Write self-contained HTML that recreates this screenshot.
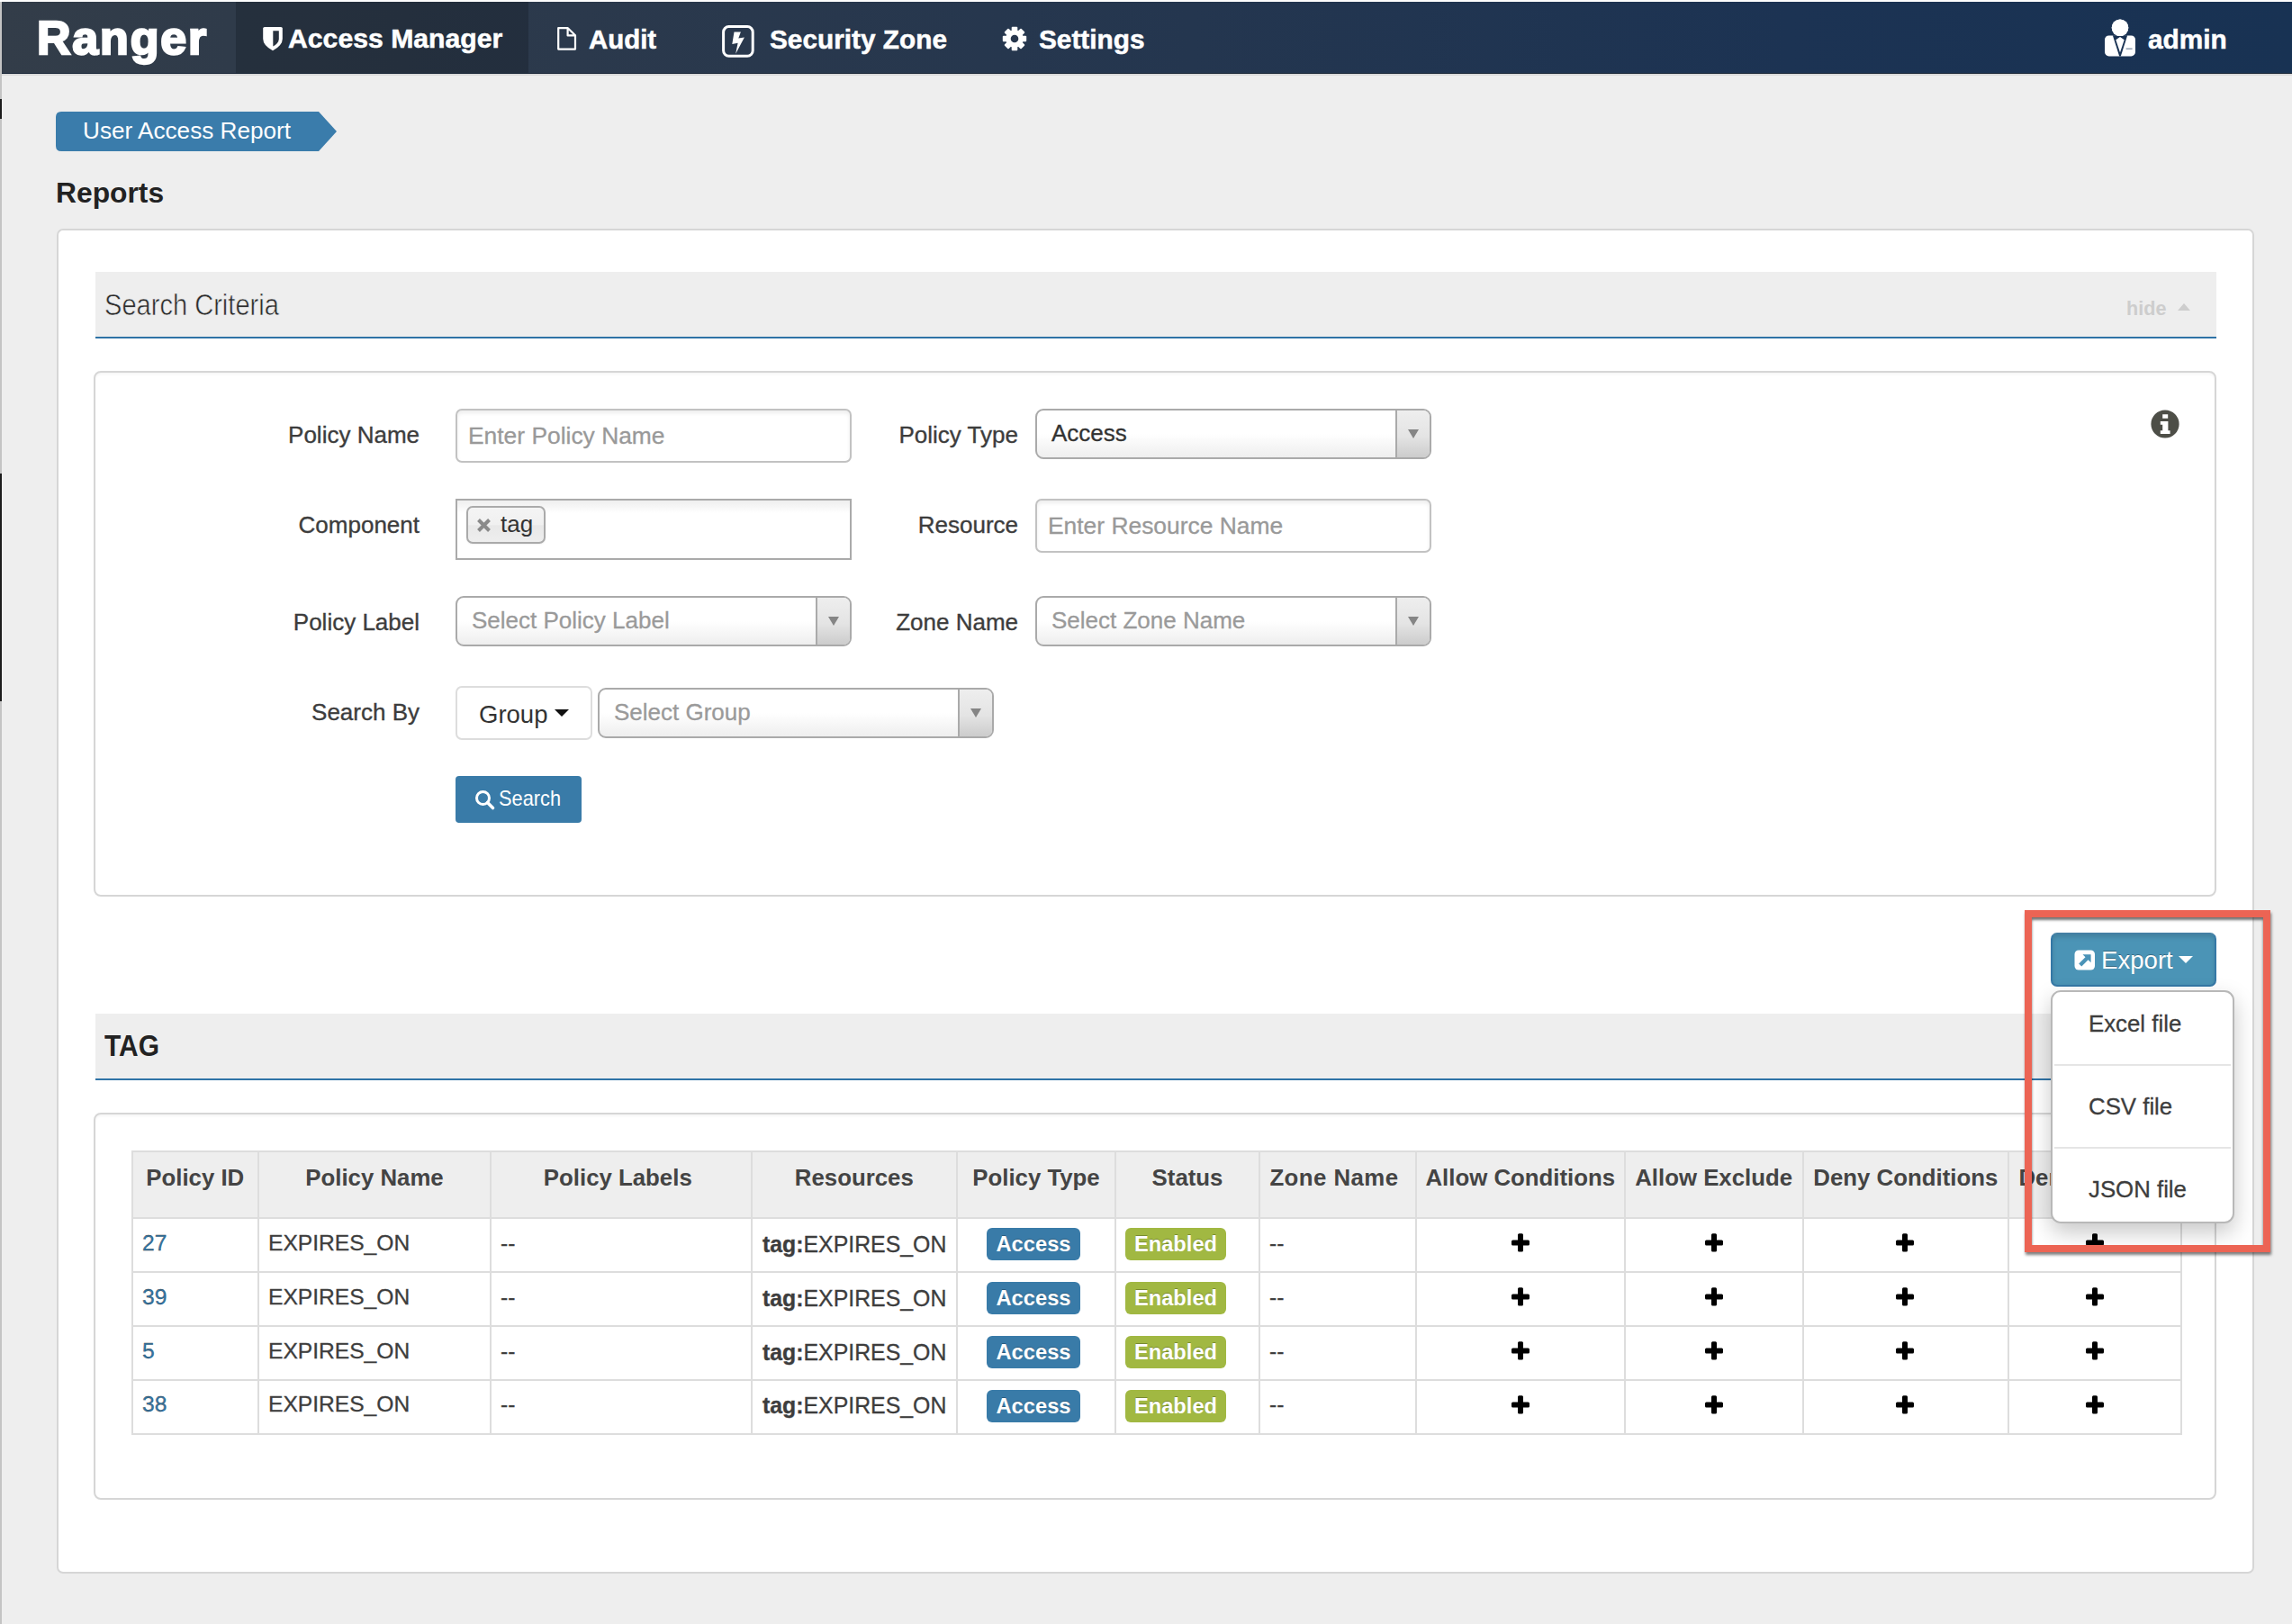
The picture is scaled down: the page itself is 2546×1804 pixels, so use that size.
<!DOCTYPE html>
<html>
<head>
<meta charset="utf-8">
<title>Ranger - User Access Report</title>
<style>
*{box-sizing:border-box;margin:0;padding:0}
html,body{width:2546px;height:1804px;overflow:hidden}
body{background:#eeeeee;font-family:"Liberation Sans",sans-serif;color:#333;position:relative}
.abs{position:absolute}
.t{position:absolute;white-space:nowrap;line-height:1}
/* left window strip */
#strip{left:0;top:0;width:2px;height:1804px;background:#c4c4c4}
#strip i{position:absolute;left:0;width:2px;background:#1c1c1c}
/* navbar */
#topwhite{left:0;top:0;width:2546px;height:2px;background:#fdfdfd}
#nav{left:2px;top:2px;width:2544px;height:80px;background:linear-gradient(90deg,#333d49 0%,#2f3b4a 10%,#2b394c 25%,#24364f 52%,#1c3353 78%,#183253 100%);border-bottom:1.5px solid #182536;box-shadow:0 2px 0 #d9d9d9}
#brand{left:2px;top:2px;width:260px;height:78.5px;background:transparent}
#active{left:262px;top:2px;width:325px;height:78.5px;background:rgba(20,24,34,0.32)}
.nv{color:#fff;font-weight:bold;font-size:29.5px;-webkit-text-stroke:0.5px #fff}
/* breadcrumb */
#crumb{left:62px;top:124px;width:312px;height:44px}
/* boxes */
.box{position:absolute;background:#fff;border:2px solid #d6d6d6;border-radius:8px}
.bar{position:absolute;background:#eeeeee;border-bottom:2px solid #2f73a6}
.lbl{font-size:26px;color:#3d3d3d;text-align:right;-webkit-text-stroke:0.35px #3d3d3d}
.inp{position:absolute;background:#fff;border:2px solid #c2c2c2;border-radius:7px;box-shadow:inset 0 3px 4px rgba(0,0,0,0.07)}
.ph{color:#999;font-size:26.4px;-webkit-text-stroke:0.3px #999}
.sel{position:absolute;border:2px solid #aaaaaa;border-radius:9px;background:linear-gradient(180deg,#ffffff 0%,#ffffff 50%,#eeeeee 100%);overflow:hidden}
.sel .ar{position:absolute;right:0;top:0;bottom:0;width:38px;border-left:2px solid #aaaaaa;background:linear-gradient(180deg,#eeeeee 0%,#e4e4e4 55%,#cccccc 100%)}
.sel .ar:after{content:"";position:absolute;left:12px;top:21px;border-left:6px solid transparent;border-right:6px solid transparent;border-top:10px solid #858585}
.sel .tx{position:absolute;left:16px;top:12px;font-size:26px;line-height:1;white-space:nowrap;color:#999;-webkit-text-stroke:0.3px}

.vl,.hl{background:#dddddd}
.th{font-size:25.8px;font-weight:bold;color:#444;text-align:center}
.td{font-size:24.6px;color:#3d3d3d;-webkit-text-stroke:0.3px #3d3d3d}
.bdg{height:36px;border-radius:6px;color:#fff;font-weight:bold;font-size:23.7px;line-height:36px;text-align:center;white-space:nowrap;text-shadow:0 -1px 0 rgba(0,0,0,.25)}
</style>
</head>
<body>
<div id="strip" class="abs"><i style="top:110px;height:22px"></i><i style="top:526px;height:253px"></i></div>
<div id="topwhite" class="abs"></div>
<div id="nav" class="abs"></div>
<div id="brand" class="abs"></div>
<div id="active" class="abs"></div>


<div class="t" id="rg" style="left:41px;top:16px;font-size:52px;font-weight:bold;color:#fff;letter-spacing:1.8px;-webkit-text-stroke:2.4px #fff">Ranger</div>
<svg class="abs" style="left:291px;top:29px" width="24" height="28" viewBox="0 0 24 28"><path d="M1.2 2.6 Q1.2 0.9 3 0.9 L21 0.9 Q22.8 0.9 22.8 2.6 L22.8 14 Q22.8 21.5 12 27.3 Q1.2 21.5 1.2 14 Z" fill="#fff"/><path d="M12.3 5.2 L18.8 5.2 L18.8 14.2 Q18.6 19 12.3 22.6 Z" fill="#29323e"/></svg>
<div class="t nv" id="n1" style="left:320px;top:28px;font-size:30.2px">Access Manager</div>
<svg class="abs" style="left:618px;top:30px" width="24" height="27" viewBox="0 0 24 27"><path d="M2.2 1.2 L12.8 1.2 L21 9.2 L21 24.6 L2.2 24.6 Z M12.6 1.4 L12.6 9.4 L20.8 9.4" fill="none" stroke="#fff" stroke-width="2.2" stroke-linejoin="round"/></svg>
<div class="t nv" id="n2" style="left:654px;top:29px;font-size:29.4px">Audit</div>
<svg class="abs" style="left:801px;top:27px" width="38" height="38" viewBox="0 0 38 38"><rect x="2.6" y="2.6" width="32.6" height="32.6" rx="6" fill="none" stroke="#fff" stroke-width="3"/><path d="M14.5 8.4 L21.9 8.4 L19.3 15.6 L25.9 14.6 L16.2 32.8 L18.6 20.8 L12.3 22 Z" fill="#fff"/></svg>
<div class="t nv" id="n3" style="left:855px;top:29px;font-size:29.8px">Security Zone</div>
<svg class="abs" style="left:1113px;top:29px" width="28" height="28" viewBox="0 0 28 28"><g fill="#fff" transform="translate(14 14)"><circle r="9.8"/><rect x="-3.3" y="-13.2" width="6.6" height="6" rx="1" transform="rotate(0)"/><rect x="-3.3" y="-13.2" width="6.6" height="6" rx="1" transform="rotate(45)"/><rect x="-3.3" y="-13.2" width="6.6" height="6" rx="1" transform="rotate(90)"/><rect x="-3.3" y="-13.2" width="6.6" height="6" rx="1" transform="rotate(135)"/><rect x="-3.3" y="-13.2" width="6.6" height="6" rx="1" transform="rotate(180)"/><rect x="-3.3" y="-13.2" width="6.6" height="6" rx="1" transform="rotate(225)"/><rect x="-3.3" y="-13.2" width="6.6" height="6" rx="1" transform="rotate(270)"/><rect x="-3.3" y="-13.2" width="6.6" height="6" rx="1" transform="rotate(315)"/></g><circle cx="14" cy="14" r="4.3" fill="#27374d"/></svg>
<div class="t nv" id="n4" style="left:1154px;top:29px;font-size:29.8px">Settings</div>
<svg class="abs" style="left:2337px;top:20px" width="36" height="44" viewBox="0 0 36 44"><circle cx="18" cy="10.8" r="9.3" fill="#fff"/><rect x="1" y="19.4" width="34" height="23" rx="4.6" fill="#fff"/><path d="M9.8 19.2 L26.2 19.2 L18.8 42.6 L17.2 42.6 Z" fill="#1a3354"/><path d="M18 21 L22.7 24.3 L18 38.2 L13.3 24.3 Z" fill="#fff"/><circle cx="18" cy="10.8" r="9.3" fill="#fff"/><rect x="24.6" y="33.6" width="7" height="1.1" fill="#6d7f97"/></svg>
<div class="t nv" id="n5" style="left:2386px;top:29px;font-size:29.8px">admin</div>



<svg id="crumb" class="abs" width="312" height="44" viewBox="0 0 312 44"><path d="M6 0 L292 0 L312 22 L292 44 L6 44 Q0 44 0 38 L0 6 Q0 0 6 0 Z" fill="#3a7cab"/></svg>
<div class="t" id="c1" style="left:92px;top:132px;font-size:26.15px;color:#fff">User Access Report</div>
<div class="t" id="c2" style="left:62px;top:199px;font-size:31.8px;font-weight:bold;color:#222">Reports</div>


<!-- MAIN-START -->
<div class="box" id="outer" style="left:63px;top:254px;width:2441px;height:1494px;border-radius:7px"></div>
<div class="bar" id="bar1" style="left:106px;top:302px;width:2356px;height:74px"></div>
<div class="t" id="sc" style="left:116px;top:321px;font-size:34px;color:#2b2b2b;transform-origin:0 0;transform:scaleX(0.855);-webkit-text-stroke:0.6px #eeeeee">Search Criteria</div>
<div class="t" id="hide" style="left:2362px;top:332px;font-size:21.6px;font-weight:bold;color:#cdcdcd">hide</div>
<div class="abs" style="left:2419px;top:337px;width:0;height:0;border-left:7px solid transparent;border-right:7px solid transparent;border-bottom:8px solid #cdcdcd"></div>
<div class="box" id="in1" style="left:104px;top:412px;width:2358px;height:584px;box-shadow:inset 0 2px 3px rgba(0,0,0,0.04)"></div>
<div class="t lbl" id="l1" style="left:166px;width:300px;top:470px">Policy Name</div>
<div class="t lbl" id="l2" style="left:166px;width:300px;top:570px">Component</div>
<div class="t lbl" id="l3" style="left:166px;width:300px;top:678px">Policy Label</div>
<div class="t lbl" id="l4" style="left:166px;width:300px;top:778px">Search By</div>
<div class="t lbl" id="l5" style="left:831px;width:300px;top:470px">Policy Type</div>
<div class="t lbl" id="l6" style="left:831px;width:300px;top:570px">Resource</div>
<div class="t lbl" id="l7" style="left:831px;width:300px;top:678px">Zone Name</div>
<div class="inp" style="left:506px;top:454px;width:440px;height:60px"></div>
<div class="t ph" id="p1" style="left:520px;top:471px">Enter Policy Name</div>
<div class="inp" style="left:1150px;top:554px;width:440px;height:60px"></div>
<div class="t ph" id="p2" style="left:1164px;top:571px">Enter Resource Name</div>
<div class="abs" style="left:506px;top:554px;width:440px;height:68px;border:2px solid #aaaaaa;background:linear-gradient(180deg,#eeeeee 0%,#ffffff 22%,#ffffff 100%)"></div>
<div class="abs" id="chip" style="left:518px;top:562px;width:88px;height:42px;border:2px solid #aaaaaa;border-radius:7px;background:linear-gradient(180deg,#f4f4f4 0%,#f0f0f0 50%,#e8e8e8 52%,#eeeeee 100%);box-shadow:0 1px 2px rgba(0,0,0,.06)"></div>
<svg class="abs" style="left:529px;top:575px" width="17" height="17" viewBox="0 0 17 17"><path d="M2.5 2.5 L14.5 14.5 M14.5 2.5 L2.5 14.5" stroke="#8a8a8a" stroke-width="4" stroke-linecap="butt"/></svg>
<div class="t" id="tag" style="left:556px;top:569px;font-size:26px;color:#333">tag</div>
<div class="sel" id="s1" style="left:1150px;top:454px;width:440px;height:56px"><div class="tx" style="color:#333">Access</div><div class="ar"></div></div>
<div class="sel" id="s2" style="left:506px;top:662px;width:440px;height:56px"><div class="tx" style="color:#9a9a9a">Select Policy Label</div><div class="ar"></div></div>
<div class="sel" id="s3" style="left:1150px;top:662px;width:440px;height:56px"><div class="tx" style="color:#9a9a9a">Select Zone Name</div><div class="ar"></div></div>
<div class="sel" id="s4" style="left:664px;top:764px;width:440px;height:56px"><div class="tx" style="color:#9a9a9a">Select Group</div><div class="ar"></div></div>
<div class="abs" id="grp" style="left:506px;top:762px;width:152px;height:60px;border:2px solid #dddddd;border-radius:7px;background:#fff"></div>
<div class="t" id="grpt" style="left:532px;top:780px;font-size:27.5px;color:#333">Group</div>
<div class="abs" style="left:616px;top:788px;width:0;height:0;border-left:8px solid transparent;border-right:8px solid transparent;border-top:8px solid #111"></div>
<div class="abs" id="sbtn" style="left:506px;top:862px;width:140px;height:52px;border-radius:4px;background:#397ba8"></div>
<svg class="abs" style="left:527px;top:877px" width="24" height="24" viewBox="0 0 24 24"><circle cx="9.5" cy="9.5" r="7" fill="none" stroke="#fff" stroke-width="3"/><path d="M14.5 14.5 L20.5 20.5" stroke="#fff" stroke-width="3.6" stroke-linecap="round"/></svg>
<div class="t" id="sbt" style="left:554px;top:876px;font-size:23.6px;color:#fff;transform-origin:0 0;transform:scaleX(0.925)">Search</div>
<svg class="abs" style="left:2389px;top:455px" width="32" height="32" viewBox="0 0 32 32"><circle cx="16" cy="16" r="15.6" fill="#4d4e47"/><path d="M13.2 5.2 h6 v4.6 h-6 z M10.8 13 h8.6 v10.2 h2.2 v3.8 h-10.8 v-3.8 h2.4 v-6.4 h-2.4 z" fill="#fff"/></svg>
<div class="bar" id="bar2" style="left:106px;top:1126px;width:2356px;height:74px"></div>
<div class="t" id="tagh" style="left:116px;top:1146px;font-size:32.7px;font-weight:bold;color:#222;transform-origin:0 0;transform:scaleX(0.915)">TAG</div>
<div class="box" id="in2" style="left:104px;top:1236px;width:2358px;height:430px;box-shadow:inset 0 2px 3px rgba(0,0,0,0.04)"></div>
<div class="abs" style="left:145.5px;top:1278px;width:2278.5px;height:76px;background:#eeeeee;border-top-left-radius:6px"></div>
<div class="abs vl" style="left:146px;top:1278px;width:2px;height:316px"></div>
<div class="abs vl" style="left:286px;top:1278px;width:2px;height:316px"></div>
<div class="abs vl" style="left:544px;top:1278px;width:2px;height:316px"></div>
<div class="abs vl" style="left:834px;top:1278px;width:2px;height:316px"></div>
<div class="abs vl" style="left:1062px;top:1278px;width:2px;height:316px"></div>
<div class="abs vl" style="left:1238px;top:1278px;width:2px;height:316px"></div>
<div class="abs vl" style="left:1398px;top:1278px;width:2px;height:316px"></div>
<div class="abs vl" style="left:1572px;top:1278px;width:2px;height:316px"></div>
<div class="abs vl" style="left:1804px;top:1278px;width:2px;height:316px"></div>
<div class="abs vl" style="left:2002px;top:1278px;width:2px;height:316px"></div>
<div class="abs vl" style="left:2230px;top:1278px;width:2px;height:316px"></div>
<div class="abs vl" style="left:2422px;top:1278px;width:2px;height:316px"></div>
<div class="abs hl" style="left:146px;top:1278px;width:2278px;height:2px"></div>
<div class="abs hl" style="left:146px;top:1352px;width:2278px;height:2px"></div>
<div class="abs hl" style="left:146px;top:1412px;width:2278px;height:2px"></div>
<div class="abs hl" style="left:146px;top:1472px;width:2278px;height:2px"></div>
<div class="abs hl" style="left:146px;top:1532px;width:2278px;height:2px"></div>
<div class="abs hl" style="left:146px;top:1592px;width:2278px;height:2px"></div>
<div class="t th" id="h0" style="left:146.5px;width:140.5px;top:1296px;">Policy ID</div>
<div class="t th" id="h1" style="left:287px;width:258px;top:1296px;">Policy Name</div>
<div class="t th" id="h2" style="left:541.5px;width:289.6px;top:1296px;">Policy Labels</div>
<div class="t th" id="h3" style="left:834.6px;width:228.39999999999998px;top:1296px;">Resources</div>
<div class="t th" id="h4" style="left:1063px;width:176px;top:1296px;">Policy Type</div>
<div class="t th" id="h5" style="left:1239px;width:160px;top:1296px;">Status</div>
<div class="t th" id="h6" style="left:1395px;width:173.9000000000001px;top:1296px;letter-spacing:0.45px;">Zone Name</div>
<div class="t th" id="h7" style="left:1572.9px;width:231.79999999999995px;top:1296px;">Allow Conditions</div>
<div class="t th" id="h8" style="left:1804.7px;width:197.89999999999986px;top:1296px;">Allow Exclude</div>
<div class="t th" id="h9" style="left:2002.6px;width:228.4000000000001px;top:1296px;">Deny Conditions</div>
<div class="t th" id="h10" style="left:2231px;width:192px;top:1296px;">Deny Exclude</div>
<div class="t td" id="r0a" style="left:158px;top:1369px;color:#2f77aa">27</div>
<div class="t td" id="r0b" style="left:298px;top:1369px">EXPIRES_ON</div>
<div class="t td" id="r0c" style="left:556px;top:1369px">--</div>
<div class="t td" id="r0d" style="left:847px;top:1371px;font-size:24.85px"><b>tag:</b>EXPIRES_ON</div>
<div class="abs bdg" id="r0e" style="left:1096px;top:1364px;width:104px;background:#397ba8">Access</div>
<div class="abs bdg" id="r0f" style="left:1250px;top:1364px;width:112px;background:#a1b842">Enabled</div>
<div class="t td" id="r0g" style="left:1410px;top:1369px">--</div>
<svg class="abs" style="left:1679px;top:1370px" width="20" height="21" viewBox="0 0 20 21"><path d="M7 1.8 Q7 0.3 8.5 0.3 H11.5 Q13 0.3 13 1.8 V7.4 H18.5 Q20 7.4 20 8.9 V11.9 Q20 13.4 18.5 13.4 H13 V19 Q13 20.5 11.5 20.5 H8.5 Q7 20.5 7 19 V13.4 H1.5 Q0 13.4 0 11.9 V8.9 Q0 7.4 1.5 7.4 H7 Z" fill="#000"/></svg>
<svg class="abs" style="left:1894px;top:1370px" width="20" height="21" viewBox="0 0 20 21"><path d="M7 1.8 Q7 0.3 8.5 0.3 H11.5 Q13 0.3 13 1.8 V7.4 H18.5 Q20 7.4 20 8.9 V11.9 Q20 13.4 18.5 13.4 H13 V19 Q13 20.5 11.5 20.5 H8.5 Q7 20.5 7 19 V13.4 H1.5 Q0 13.4 0 11.9 V8.9 Q0 7.4 1.5 7.4 H7 Z" fill="#000"/></svg>
<svg class="abs" style="left:2106px;top:1370px" width="20" height="21" viewBox="0 0 20 21"><path d="M7 1.8 Q7 0.3 8.5 0.3 H11.5 Q13 0.3 13 1.8 V7.4 H18.5 Q20 7.4 20 8.9 V11.9 Q20 13.4 18.5 13.4 H13 V19 Q13 20.5 11.5 20.5 H8.5 Q7 20.5 7 19 V13.4 H1.5 Q0 13.4 0 11.9 V8.9 Q0 7.4 1.5 7.4 H7 Z" fill="#000"/></svg>
<svg class="abs" style="left:2317px;top:1370px" width="20" height="21" viewBox="0 0 20 21"><path d="M7 1.8 Q7 0.3 8.5 0.3 H11.5 Q13 0.3 13 1.8 V7.4 H18.5 Q20 7.4 20 8.9 V11.9 Q20 13.4 18.5 13.4 H13 V19 Q13 20.5 11.5 20.5 H8.5 Q7 20.5 7 19 V13.4 H1.5 Q0 13.4 0 11.9 V8.9 Q0 7.4 1.5 7.4 H7 Z" fill="#000"/></svg>
<div class="t td" id="r1a" style="left:158px;top:1429px;color:#2f77aa">39</div>
<div class="t td" id="r1b" style="left:298px;top:1429px">EXPIRES_ON</div>
<div class="t td" id="r1c" style="left:556px;top:1429px">--</div>
<div class="t td" id="r1d" style="left:847px;top:1431px;font-size:24.85px"><b>tag:</b>EXPIRES_ON</div>
<div class="abs bdg" id="r1e" style="left:1096px;top:1424px;width:104px;background:#397ba8">Access</div>
<div class="abs bdg" id="r1f" style="left:1250px;top:1424px;width:112px;background:#a1b842">Enabled</div>
<div class="t td" id="r1g" style="left:1410px;top:1429px">--</div>
<svg class="abs" style="left:1679px;top:1430px" width="20" height="21" viewBox="0 0 20 21"><path d="M7 1.8 Q7 0.3 8.5 0.3 H11.5 Q13 0.3 13 1.8 V7.4 H18.5 Q20 7.4 20 8.9 V11.9 Q20 13.4 18.5 13.4 H13 V19 Q13 20.5 11.5 20.5 H8.5 Q7 20.5 7 19 V13.4 H1.5 Q0 13.4 0 11.9 V8.9 Q0 7.4 1.5 7.4 H7 Z" fill="#000"/></svg>
<svg class="abs" style="left:1894px;top:1430px" width="20" height="21" viewBox="0 0 20 21"><path d="M7 1.8 Q7 0.3 8.5 0.3 H11.5 Q13 0.3 13 1.8 V7.4 H18.5 Q20 7.4 20 8.9 V11.9 Q20 13.4 18.5 13.4 H13 V19 Q13 20.5 11.5 20.5 H8.5 Q7 20.5 7 19 V13.4 H1.5 Q0 13.4 0 11.9 V8.9 Q0 7.4 1.5 7.4 H7 Z" fill="#000"/></svg>
<svg class="abs" style="left:2106px;top:1430px" width="20" height="21" viewBox="0 0 20 21"><path d="M7 1.8 Q7 0.3 8.5 0.3 H11.5 Q13 0.3 13 1.8 V7.4 H18.5 Q20 7.4 20 8.9 V11.9 Q20 13.4 18.5 13.4 H13 V19 Q13 20.5 11.5 20.5 H8.5 Q7 20.5 7 19 V13.4 H1.5 Q0 13.4 0 11.9 V8.9 Q0 7.4 1.5 7.4 H7 Z" fill="#000"/></svg>
<svg class="abs" style="left:2317px;top:1430px" width="20" height="21" viewBox="0 0 20 21"><path d="M7 1.8 Q7 0.3 8.5 0.3 H11.5 Q13 0.3 13 1.8 V7.4 H18.5 Q20 7.4 20 8.9 V11.9 Q20 13.4 18.5 13.4 H13 V19 Q13 20.5 11.5 20.5 H8.5 Q7 20.5 7 19 V13.4 H1.5 Q0 13.4 0 11.9 V8.9 Q0 7.4 1.5 7.4 H7 Z" fill="#000"/></svg>
<div class="t td" id="r2a" style="left:158px;top:1489px;color:#2f77aa">5</div>
<div class="t td" id="r2b" style="left:298px;top:1489px">EXPIRES_ON</div>
<div class="t td" id="r2c" style="left:556px;top:1489px">--</div>
<div class="t td" id="r2d" style="left:847px;top:1491px;font-size:24.85px"><b>tag:</b>EXPIRES_ON</div>
<div class="abs bdg" id="r2e" style="left:1096px;top:1484px;width:104px;background:#397ba8">Access</div>
<div class="abs bdg" id="r2f" style="left:1250px;top:1484px;width:112px;background:#a1b842">Enabled</div>
<div class="t td" id="r2g" style="left:1410px;top:1489px">--</div>
<svg class="abs" style="left:1679px;top:1490px" width="20" height="21" viewBox="0 0 20 21"><path d="M7 1.8 Q7 0.3 8.5 0.3 H11.5 Q13 0.3 13 1.8 V7.4 H18.5 Q20 7.4 20 8.9 V11.9 Q20 13.4 18.5 13.4 H13 V19 Q13 20.5 11.5 20.5 H8.5 Q7 20.5 7 19 V13.4 H1.5 Q0 13.4 0 11.9 V8.9 Q0 7.4 1.5 7.4 H7 Z" fill="#000"/></svg>
<svg class="abs" style="left:1894px;top:1490px" width="20" height="21" viewBox="0 0 20 21"><path d="M7 1.8 Q7 0.3 8.5 0.3 H11.5 Q13 0.3 13 1.8 V7.4 H18.5 Q20 7.4 20 8.9 V11.9 Q20 13.4 18.5 13.4 H13 V19 Q13 20.5 11.5 20.5 H8.5 Q7 20.5 7 19 V13.4 H1.5 Q0 13.4 0 11.9 V8.9 Q0 7.4 1.5 7.4 H7 Z" fill="#000"/></svg>
<svg class="abs" style="left:2106px;top:1490px" width="20" height="21" viewBox="0 0 20 21"><path d="M7 1.8 Q7 0.3 8.5 0.3 H11.5 Q13 0.3 13 1.8 V7.4 H18.5 Q20 7.4 20 8.9 V11.9 Q20 13.4 18.5 13.4 H13 V19 Q13 20.5 11.5 20.5 H8.5 Q7 20.5 7 19 V13.4 H1.5 Q0 13.4 0 11.9 V8.9 Q0 7.4 1.5 7.4 H7 Z" fill="#000"/></svg>
<svg class="abs" style="left:2317px;top:1490px" width="20" height="21" viewBox="0 0 20 21"><path d="M7 1.8 Q7 0.3 8.5 0.3 H11.5 Q13 0.3 13 1.8 V7.4 H18.5 Q20 7.4 20 8.9 V11.9 Q20 13.4 18.5 13.4 H13 V19 Q13 20.5 11.5 20.5 H8.5 Q7 20.5 7 19 V13.4 H1.5 Q0 13.4 0 11.9 V8.9 Q0 7.4 1.5 7.4 H7 Z" fill="#000"/></svg>
<div class="t td" id="r3a" style="left:158px;top:1548px;color:#2f77aa">38</div>
<div class="t td" id="r3b" style="left:298px;top:1548px">EXPIRES_ON</div>
<div class="t td" id="r3c" style="left:556px;top:1548px">--</div>
<div class="t td" id="r3d" style="left:847px;top:1550px;font-size:24.85px"><b>tag:</b>EXPIRES_ON</div>
<div class="abs bdg" id="r3e" style="left:1096px;top:1544px;width:104px;background:#397ba8">Access</div>
<div class="abs bdg" id="r3f" style="left:1250px;top:1544px;width:112px;background:#a1b842">Enabled</div>
<div class="t td" id="r3g" style="left:1410px;top:1548px">--</div>
<svg class="abs" style="left:1679px;top:1550px" width="20" height="21" viewBox="0 0 20 21"><path d="M7 1.8 Q7 0.3 8.5 0.3 H11.5 Q13 0.3 13 1.8 V7.4 H18.5 Q20 7.4 20 8.9 V11.9 Q20 13.4 18.5 13.4 H13 V19 Q13 20.5 11.5 20.5 H8.5 Q7 20.5 7 19 V13.4 H1.5 Q0 13.4 0 11.9 V8.9 Q0 7.4 1.5 7.4 H7 Z" fill="#000"/></svg>
<svg class="abs" style="left:1894px;top:1550px" width="20" height="21" viewBox="0 0 20 21"><path d="M7 1.8 Q7 0.3 8.5 0.3 H11.5 Q13 0.3 13 1.8 V7.4 H18.5 Q20 7.4 20 8.9 V11.9 Q20 13.4 18.5 13.4 H13 V19 Q13 20.5 11.5 20.5 H8.5 Q7 20.5 7 19 V13.4 H1.5 Q0 13.4 0 11.9 V8.9 Q0 7.4 1.5 7.4 H7 Z" fill="#000"/></svg>
<svg class="abs" style="left:2106px;top:1550px" width="20" height="21" viewBox="0 0 20 21"><path d="M7 1.8 Q7 0.3 8.5 0.3 H11.5 Q13 0.3 13 1.8 V7.4 H18.5 Q20 7.4 20 8.9 V11.9 Q20 13.4 18.5 13.4 H13 V19 Q13 20.5 11.5 20.5 H8.5 Q7 20.5 7 19 V13.4 H1.5 Q0 13.4 0 11.9 V8.9 Q0 7.4 1.5 7.4 H7 Z" fill="#000"/></svg>
<svg class="abs" style="left:2317px;top:1550px" width="20" height="21" viewBox="0 0 20 21"><path d="M7 1.8 Q7 0.3 8.5 0.3 H11.5 Q13 0.3 13 1.8 V7.4 H18.5 Q20 7.4 20 8.9 V11.9 Q20 13.4 18.5 13.4 H13 V19 Q13 20.5 11.5 20.5 H8.5 Q7 20.5 7 19 V13.4 H1.5 Q0 13.4 0 11.9 V8.9 Q0 7.4 1.5 7.4 H7 Z" fill="#000"/></svg>

<!-- MAIN-END -->
<!-- OVERLAY-START -->
<div class="abs" id="exp" style="left:2278px;top:1036px;width:184px;height:60px;border-radius:7px;background:#4b94b6;border:2px solid #3578a6;border-top-color:#4480a4;box-shadow:inset 0 3px 5px rgba(0,0,0,.13)"></div>
<svg class="abs" style="left:2304px;top:1055px" width="24" height="24" viewBox="0 0 24 24"><rect x="0.5" y="0.5" width="22.5" height="22" rx="4.5" fill="#fff"/><path d="M9.5 5.2 L18.6 5.2 L18.6 14.3 L15.6 11.3 L8.3 18.6 L5.2 15.5 L12.5 8.2 Z" fill="#4a93b7"/></svg>
<div class="t" id="expt" style="left:2334px;top:1053px;font-size:27.6px;color:#fff;text-shadow:0 -1px 0 rgba(0,0,0,.28)">Export</div>
<div class="abs" style="left:2420px;top:1062px;width:0;height:0;border-left:8px solid transparent;border-right:8px solid transparent;border-top:8px solid #fff"></div>
<div class="abs" id="dd" style="left:2278px;top:1100px;width:204px;height:259px;background:#fff;border:2px solid #b8b8b8;border-radius:11px;box-shadow:0 10px 24px rgba(0,0,0,.22)"></div>
<div class="abs" style="left:2282px;top:1182px;width:196px;height:2px;background:#e5e5e5"></div>
<div class="abs" style="left:2282px;top:1274px;width:196px;height:2px;background:#e5e5e5"></div>
<div class="t" id="d1" style="left:2320px;top:1125px;font-size:25.8px;color:#3d3d3d;-webkit-text-stroke:0.3px #3d3d3d">Excel file</div>
<div class="t" id="d2" style="left:2320px;top:1217px;font-size:25.8px;color:#3d3d3d;-webkit-text-stroke:0.3px #3d3d3d">CSV file</div>
<div class="t" id="d3" style="left:2320px;top:1309px;font-size:25.8px;color:#3d3d3d;-webkit-text-stroke:0.3px #3d3d3d">JSON file</div>
<div class="abs" id="red" style="left:2249px;top:1011px;width:273px;height:380px;border:8px solid #ec6454;box-shadow:1px 3px 3px rgba(0,0,0,.5), inset 0 3px 3px rgba(0,0,0,.55)"></div>
<!-- OVERLAY-END -->

</body>
</html>
